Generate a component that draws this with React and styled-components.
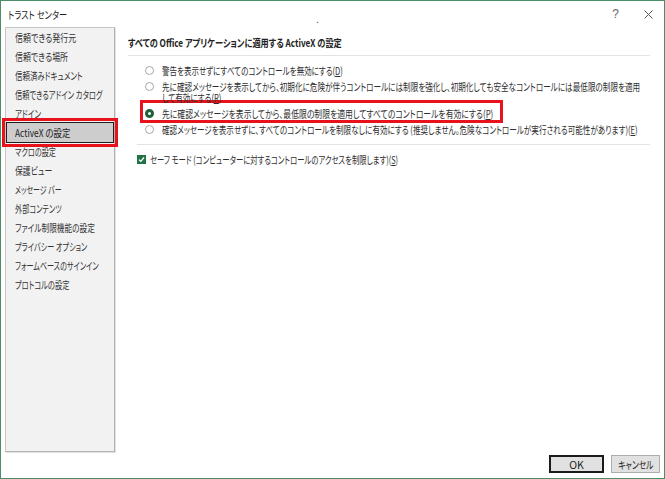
import React from 'react';
import styled, { createGlobalStyle } from 'styled-components';

const Global = createGlobalStyle`
  html, body { margin: 0; padding: 0; background: #fff; }
  body {
    font-family: "Noto Sans CJK JP", "Noto Sans", sans-serif;
    font-feature-settings: "palt";
  }
`;

const Squeeze = styled.span`
  display: inline-block;
  white-space: nowrap;
  transform: scaleX(${(p) => p.$k || 0.725});
  transform-origin: 0 50%;
`;

const Window = styled.div`
  width: 665px;
  height: 479px;
  box-sizing: border-box;
  border: 1px solid #4b8d67;
  display: flex;
  flex-direction: column;
  background: #fff;
  color: #262626;
  overflow: hidden;
`;

const TitleBar = styled.div`
  height: 26px;
  flex-shrink: 0;
  display: flex;
  align-items: center;
  padding: 0 11px 0 7px;
  font-size: 10.5px;
  color: #1f1f1f;
`;

const Title = styled.span`
  width: 60px;
`;

const Dot = styled.span`
  margin-left: 248px;
  margin-top: 8px;
  color: #555;
  font-size: 10px;
`;

const TitleButtons = styled.div`
  margin-left: auto;
  display: flex;
  align-items: center;
  gap: 24px;
`;

const Help = styled.span`
  font-family: "Liberation Sans", sans-serif;
  font-size: 12px;
  color: #666;
  margin-right: 1px;
`;

const Body = styled.div`
  flex: 1;
  display: flex;
  min-height: 0;
  padding-left: 4px;
`;

const Sidebar = styled.nav`
  width: 110px;
  box-sizing: border-box;
  background: #f2f2f2;
  border: 1px solid #c6c6c6;
  border-right-color: #b2b2b2;
  border-bottom-color: #b2b2b2;
  box-shadow: 1px 1px 0 #e2e2e2;
  padding: 0 1px;
  display: flex;
  flex-direction: column;
  flex-shrink: 0;
`;

const NavItem = styled.div`
  height: 19px;
  flex-shrink: 0;
  display: flex;
  align-items: center;
  padding-left: 8px;
  font-size: 10.5px;
  color: #333;
  ${(p) =>
    p.$active &&
    `
    background: #cdcdcd;
    box-shadow: 0 0 0 1px #1e1e1e;
    outline: 3px solid #e8121c;
    outline-offset: 2px;
    color: #222;
  `}
`;

const Main = styled.section`
  flex: 1;
  display: flex;
  flex-direction: column;
  padding: 9px 14px 0 13px;
  min-width: 0;
`;

const Heading = styled.h2`
  margin: 0;
  font-size: 10.5px;
  font-weight: 700;
  line-height: 14px;
  color: #222;
`;

const Separator = styled.hr`
  margin: ${(p) => p.$mt || 4}px 0 0 ${(p) => p.$ml || 0}px;
  border: 0;
  border-top: 1px solid #e3e3e3;
  height: 0;
`;

const RadioGroup = styled.div`
  display: flex;
  flex-direction: column;
  padding: 9px 0 0 17px;
  gap: 5px;
`;

const RadioRow = styled.label`
  display: flex;
  align-items: flex-start;
  gap: 8px;
  font-size: 10.5px;
  line-height: 11px;
  color: #2e2e2e;
  ${(p) =>
    p.$highlight &&
    `
    align-self: flex-start;
    width: 355px;
    border: 3px solid #e8121c;
    padding: 5px 0 1px 2px;
    margin: -8px 0 -4px -5px;
  `}
`;

const RadioCircle = styled.span`
  width: 9px;
  height: 9px;
  border-radius: 50%;
  box-sizing: border-box;
  flex-shrink: 0;
  margin-top: 1px;
  background: #fff;
  border: ${(p) => (p.$checked ? '3px solid #1f5f37' : '1px solid #a8a8a8')};
`;

const RadioText = styled.span`
  display: flex;
  flex-direction: column;
  min-width: 0;
`;

const U = styled.span`
  text-decoration: underline;
`;

const CheckRow = styled.label`
  display: flex;
  align-items: center;
  gap: 4px;
  margin: 9px 0 0 9px;
  font-size: 10.5px;
  line-height: 11px;
  color: #2e2e2e;
`;

const CheckBox = styled.span`
  width: 9px;
  height: 9px;
  background: #217346;
  display: inline-flex;
  align-items: center;
  justify-content: center;
  flex-shrink: 0;
`;

const Footer = styled.div`
  height: 26px;
  flex-shrink: 0;
  display: flex;
  justify-content: flex-end;
  align-items: flex-start;
  padding: 3px 4px 0 0;
  gap: 7px;
  box-sizing: border-box;
`;

const Button = styled.button`
  height: 18px;
  width: ${(p) => p.$w}px;
  box-sizing: border-box;
  background: #e1e1e1;
  border: 1px solid ${(p) => (p.$default ? '#1b1b1b' : '#adadad')};
  box-shadow: ${(p) => (p.$default ? 'inset 0 0 0 1px #1b1b1b' : 'none')};
  font-family: "Noto Sans CJK JP", "Noto Sans", sans-serif;
  font-feature-settings: "palt";
  font-size: 10.5px;
  color: #222;
  padding: 0;
  display: flex;
  align-items: center;
  justify-content: center;
`;

const ButtonLabel = styled.span`
  display: inline-block;
  white-space: nowrap;
  transform: scaleX(${(p) => p.$k || 1});
`;

const navItems = [
  ['信頼できる発行元', 0.76],
  ['信頼できる場所', 0.757],
  ['信頼済みドキュメント', 0.71],
  ['信頼できるアドイン カタログ', 0.69],
  ['アドイン', 0.71],
  ['ActiveX の設定', 0.8],
  ['マクロの設定', 0.68],
  ['保護ビュー', 0.75],
  ['メッセージ バー', 0.66],
  ['外部コンテンツ', 0.68],
  ['ファイル制限機能の設定', 0.73],
  ['プライバシー オプション', 0.68],
  ['フォームベースのサインイン', 0.675],
  ['プロトコルの設定', 0.69],
];

export default function App() {
  return (
    <>
      <Global />
      <Window>
        <TitleBar>
          <Title>
            <Squeeze $k={0.78}>トラスト センター</Squeeze>
          </Title>
          <Dot>.</Dot>
          <TitleButtons>
            <Help>?</Help>
            <svg width="9" height="9" viewBox="0 0 9 9">
              <path d="M0.5 0.5 L8.5 8.5 M8.5 0.5 L0.5 8.5" stroke="#555" strokeWidth="1" />
            </svg>
          </TitleButtons>
        </TitleBar>
        <Body>
          <Sidebar>
            {navItems.map(([t, k]) => (
              <NavItem key={t} $active={t === 'ActiveX の設定'}>
                <Squeeze $k={k}>{t}</Squeeze>
              </NavItem>
            ))}
          </Sidebar>
          <Main>
            <Heading>
              <Squeeze $k={0.78}>すべての Office アプリケーションに適用する ActiveX の設定</Squeeze>
            </Heading>
            <Separator $mt={5} />
            <RadioGroup>
              <RadioRow>
                <RadioCircle />
                <RadioText>
                  <Squeeze $k={0.716}>
                    警告を表示せずにすべてのコントロールを無効にする(<U>D</U>)
                  </Squeeze>
                </RadioText>
              </RadioRow>
              <RadioRow>
                <RadioCircle />
                <RadioText>
                  <Squeeze $k={0.723}>
                    先に確認メッセージを表示してから、初期化に危険が伴うコントロールには制限を強化し、初期化しても安全なコントロールには最低限の制限を適用
                  </Squeeze>
                  <Squeeze $k={0.723}>
                    して有効にする(<U>R</U>)
                  </Squeeze>
                </RadioText>
              </RadioRow>
              <RadioRow $highlight>
                <RadioCircle $checked />
                <RadioText>
                  <Squeeze $k={0.745}>
                    先に確認メッセージを表示してから、最低限の制限を適用してすべてのコントロールを有効にする(<U>P</U>)
                  </Squeeze>
                </RadioText>
              </RadioRow>
              <RadioRow>
                <RadioCircle />
                <RadioText>
                  <Squeeze $k={0.723}>
                    確認メッセージを表示せずに、すべてのコントロールを制限なしに有効にする (推奨しません。危険なコントロールが実行される可能性があります)(<U>E</U>)
                  </Squeeze>
                </RadioText>
              </RadioRow>
            </RadioGroup>
            <Separator $mt={9} $ml={9} />
            <CheckRow>
              <CheckBox>
                <svg width="7" height="7" viewBox="0 0 7 7">
                  <path d="M1 3.6 L2.8 5.3 L6 1.5" fill="none" stroke="#fff" strokeWidth="1.3" />
                </svg>
              </CheckBox>
              <Squeeze $k={0.7}>
                セーフ モード (コンピューターに対するコントロールのアクセスを制限します)(<U>S</U>)
              </Squeeze>
            </CheckRow>
          </Main>
        </Body>
        <Footer>
          <Button $default $w={55}>
            <ButtonLabel>OK</ButtonLabel>
          </Button>
          <Button $w={49}>
            <ButtonLabel $k={0.74}>キャンセル</ButtonLabel>
          </Button>
        </Footer>
      </Window>
    </>
  );
}
